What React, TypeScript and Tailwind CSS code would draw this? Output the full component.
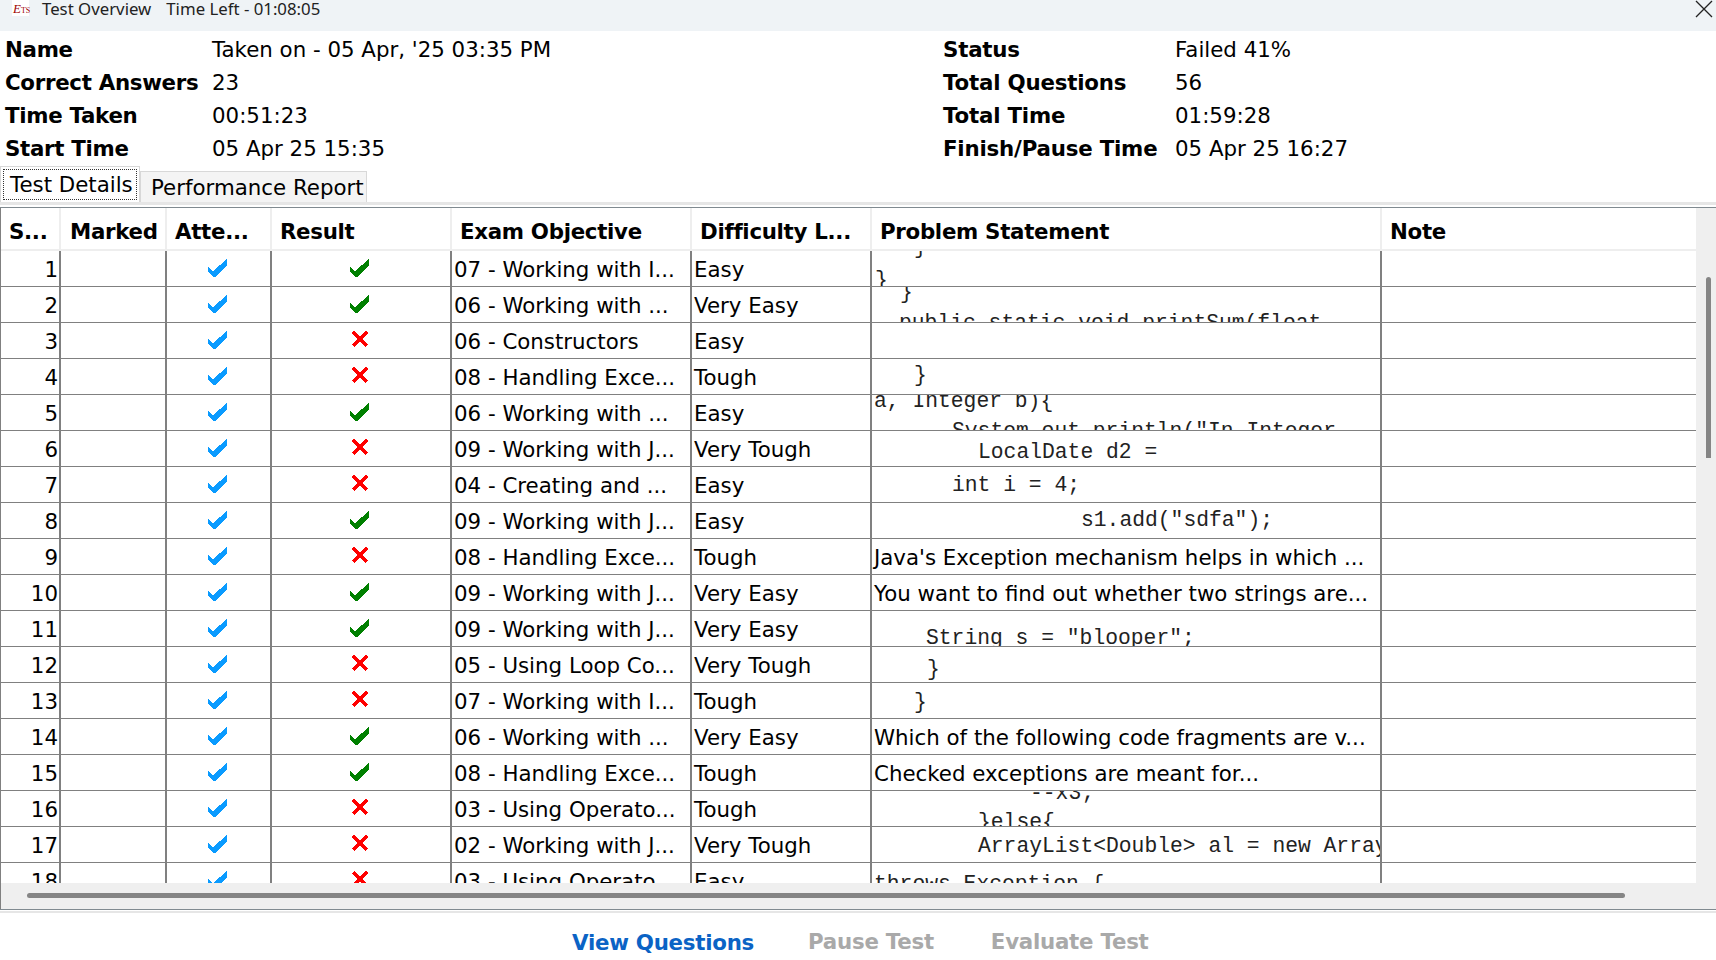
import React from 'react'

const info = [
  ['Name', 'Taken on - 05 Apr, \'25 03:35 PM', 'Status', 'Failed 41%'],
  ['Correct Answers', '23', 'Total Questions', '56'],
  ['Time Taken', '00:51:23', 'Total Time', '01:59:28'],
  ['Start Time', '05 Apr 25 15:35', 'Finish/Pause Time', '05 Apr 25 16:27'],
]

type Line = { text: string; cls: string; tail?: string }
type Row = { obj: string; diff: string; ok: boolean; text?: string; code?: Line[] }

const rows: Row[] = [
  { obj: '07 - Working with I...', diff: 'Easy', ok: true, code: [{ text: '}', cls: 'mt-[-18px] ml-[42px]' }, { text: '}', cls: 'mt-[5px] ml-[3px]' }] },
  { obj: '06 - Working with ...', diff: 'Very Easy', ok: true, code: [{ text: '}', cls: 'mt-[-9px] ml-[28px]' }, { text: 'public static void printSum(float', cls: 'mt-[3px] ml-[27px]' }] },
  { obj: '06 - Constructors', diff: 'Easy', ok: false },
  { obj: '08 - Handling Exce...', diff: 'Tough', ok: false, code: [{ text: '}', cls: 'mt-[2px] ml-[42px]' }] },
  { obj: '06 - Working with ...', diff: 'Easy', ok: true, code: [{ text: 'a, Integer b){', cls: 'mt-[-8px] ml-[2px]' }, { text: 'System.out.println("In Integer', cls: 'mt-[2px] ml-[80px]' }] },
  { obj: '09 - Working with J...', diff: 'Very Tough', ok: false, code: [{ text: 'LocalDate d2 =', cls: 'mt-[7px] ml-[106px]' }] },
  { obj: '04 - Creating and ...', diff: 'Easy', ok: false, code: [{ text: 'int i = 4;', cls: 'mt-[4px] ml-[80px]' }] },
  { obj: '09 - Working with J...', diff: 'Easy', ok: true, code: [{ text: 's1.add("sdfa");', cls: 'mt-[3px] ml-[209px]' }] },
  { obj: '08 - Handling Exce...', diff: 'Tough', ok: false, text: "Java's Exception mechanism helps in which ..." },
  { obj: '09 - Working with J...', diff: 'Very Easy', ok: true, text: 'You want to find out whether two strings are...' },
  { obj: '09 - Working with J...', diff: 'Very Easy', ok: true, code: [{ text: 'String s = "blooper";', cls: 'mt-[13px] ml-[54px]', tail: ',  ,,' }] },
  { obj: '05 - Using Loop Co...', diff: 'Very Tough', ok: false, code: [{ text: '}', cls: 'mt-[8px] ml-[55px]' }] },
  { obj: '07 - Working with I...', diff: 'Tough', ok: false, code: [{ text: '}', cls: 'mt-[5px] ml-[42px]' }] },
  { obj: '06 - Working with ...', diff: 'Very Easy', ok: true, text: 'Which of the following code fragments are v...' },
  { obj: '08 - Handling Exce...', diff: 'Tough', ok: true, text: 'Checked exceptions are meant for...' },
  { obj: '03 - Using Operato...', diff: 'Tough', ok: false, code: [{ text: '--x3;', cls: 'mt-[-12px] ml-[158px]' }, { text: '}else{', cls: 'mt-[1px] ml-[106px]' }] },
  { obj: '02 - Working with J...', diff: 'Very Tough', ok: false, code: [{ text: 'ArrayList<Double> al = new ArrayList<>();', cls: 'mt-[5px] ml-[106px]' }] },
  { obj: '03 - Using Operato...', diff: 'Easy', ok: false, code: [{ text: 'throws Exception {', cls: 'mt-[7px] ml-[2px]' }] },
]

const headers = [
  { label: 'Marked', cls: 'w-[106px] pl-[9px]' },
  { label: 'Atte...', cls: 'w-[105px] pl-[8px]' },
  { label: 'Result', cls: 'w-[180px] pl-[8px]' },
  { label: 'Exam Objective', cls: 'w-[240px] pl-[8px]' },
  { label: 'Difficulty L...', cls: 'w-[180px] pl-[8px]' },
  { label: 'Problem Statement', cls: 'w-[510px] pl-[8px]' },
  { label: 'Note', cls: 'flex-1 pl-[8px]' },
]

const Check = ({ color }: { color: string }) => (
  <svg width="19" height="18" viewBox="0 0 19 18" shapeRendering="crispEdges">
    <polygon points="0,8 5,12 19,0 19,7 7,18 5,18 0,13" fill={color} />
  </svg>
)

const Cross = () => (
  <svg width="16" height="16" viewBox="0 0 16 16" shapeRendering="crispEdges">
    <path d="M1 1 L15 15 M15 1 L1 15" stroke="#ff0000" strokeWidth="3" fill="none" />
  </svg>
)

const App = () => {
  return (
    <div className="w-[1716px] h-[960px] overflow-hidden bg-white text-black flex flex-col font-['DejaVu_Sans',sans-serif] text-[21.33px]">
      {/* title bar */}
      <div className="h-[31px] shrink-0 bg-[#eff3f6] flex items-start text-[16.8px] leading-[18px] font-['Noto_Sans',sans-serif] text-[#222]">
        <div className="ml-[12px] w-[17px] h-[16px] pl-[1px] pt-[3px] bg-white text-[#a00000] leading-[10px] font-['Liberation_Serif',serif] whitespace-nowrap">
          <span className="italic text-[13px]">E</span><span className="text-[8px]">TS</span>
        </div>
        <span className="ml-[13px]">Test Overview</span>
        <span className="ml-[15px]">Time Left - 01:08:05</span>
        <svg className="ml-auto mr-[3px]" width="19" height="18" viewBox="0 0 19 18">
          <path d="M2 1 L18 17 M18 1 L2 17" stroke="#222" strokeWidth="1.3" />
        </svg>
      </div>

      {/* summary */}
      <div className="h-[134px] shrink-0 pt-[2px] grid grid-cols-[212px_731px_232px_1fr] auto-rows-[33px] items-center">
        {info.map((r) => (
          <React.Fragment key={r[0]}>
            <div className="font-bold tracking-[-0.3px] pl-[5px] whitespace-nowrap">{r[0]}</div>
            <div className="whitespace-nowrap">{r[1]}</div>
            <div className="font-bold tracking-[-0.2px] whitespace-nowrap">{r[2]}</div>
            <div className="whitespace-nowrap">{r[3]}</div>
          </React.Fragment>
        ))}
      </div>

      {/* tabs */}
      <div className="h-[39px] shrink-0 flex items-end border-b-[3px] border-[#e6e6e6] mt-[1px]">
        <div className="w-[140px] h-[36px] border border-b-0 border-[#d8d8d8] bg-white p-[2px]">
          <div className="h-full border border-dotted border-[#333] pl-[6px] leading-[30px] whitespace-nowrap">Test Details</div>
        </div>
        <div className="w-[227px] h-[31px] border border-b-0 border-[#d8d8d8] bg-[#f4f4f4] pl-[10px] leading-[31px] whitespace-nowrap">Performance Report</div>
      </div>

      {/* table */}
      <div className="mt-[2px] flex-1 min-h-0 border-t border-[#808a90] flex flex-col">
        <div className="flex-1 min-h-0 flex">
          <div className="flex-1 min-w-0 overflow-hidden border-l border-[#808080]">
            <div className="h-[43px] flex items-center font-bold tracking-[-0.3px] border-b-2 border-[#eeeeee] whitespace-nowrap">
              <div className="w-[58px] pl-[8px] pt-[7px] h-full flex items-center">S...</div>
              {headers.map((h) => (
                <div key={h.label} className={'border-l-2 border-[#eeeeee] pt-[7px] h-full flex items-center ' + h.cls}>{h.label}</div>
              ))}
            </div>
            {rows.map((r, i) => (
              <div key={i} className="h-[36px] flex border-b border-[#808080] leading-[37px] whitespace-nowrap">
                <div className="w-[58px] pr-[1px] text-right">{i + 1}</div>
                <div className="w-[106px] border-l-2 border-[#808080]"></div>
                <div className="w-[105px] border-l-2 border-[#808080] pl-[41px] pt-[8px]"><Check color="#0a9bff" /></div>
                <div className="w-[180px] border-l-2 border-[#808080] pl-[78px] pt-[8px]">
                  {r.ok ? <Check color="#008000" /> : <div className="pl-[2px]"><Cross /></div>}
                </div>
                <div className="w-[240px] border-l-2 border-[#808080] pl-[2px] overflow-hidden">{r.obj}</div>
                <div className="w-[180px] border-l-2 border-[#808080] pl-[2px]">{r.diff}</div>
                <div className="w-[510px] border-l-2 border-[#808080] overflow-hidden">
                  {r.text && <div className="pl-[2px]">{r.text}</div>}
                  {r.code?.map((l) => (
                    <div key={l.text} className={"font-['Liberation_Mono',monospace] text-[21.33px] leading-[28px] text-[#222] whitespace-pre " + l.cls}>
                      {l.text}
                      {l.tail && <span className="relative top-[8px] ml-[24px]">{l.tail}</span>}
                    </div>
                  ))}
                </div>
                <div className="flex-1 border-l-2 border-[#808080]"></div>
              </div>
            ))}
          </div>
          {/* vertical scrollbar */}
          <div className="w-[20px] shrink-0 bg-[#efefef] pl-[10px] pt-[69px]">
            <div className="w-[5px] h-[181px] rounded-t-sm bg-[#858585]"></div>
          </div>
        </div>
        {/* horizontal scrollbar */}
        <div className="h-[26px] shrink-0 bg-[#efefef] border-l border-[#808080] pl-[26px] pt-[10px]">
          <div className="w-[1598px] h-[5px] rounded-sm bg-[#858585]"></div>
        </div>
      </div>
      <div className="h-[4px] shrink-0 border-t border-[#808a90] border-b-[2px] border-b-[#e6e6e6]"></div>

      {/* bottom actions */}
      <div className="h-[47px] shrink-0 pt-[10px] flex items-center font-bold tracking-[-0.25px]">
        <a href="#" className="ml-[572px] mt-[2px] text-[#0b63c5]">View Questions</a>
        <span className="ml-[54px] text-[#a9a9a9]">Pause Test</span>
        <span className="ml-[57px] text-[#a9a9a9]">Evaluate Test</span>
      </div>
    </div>
  )
}

export default App
